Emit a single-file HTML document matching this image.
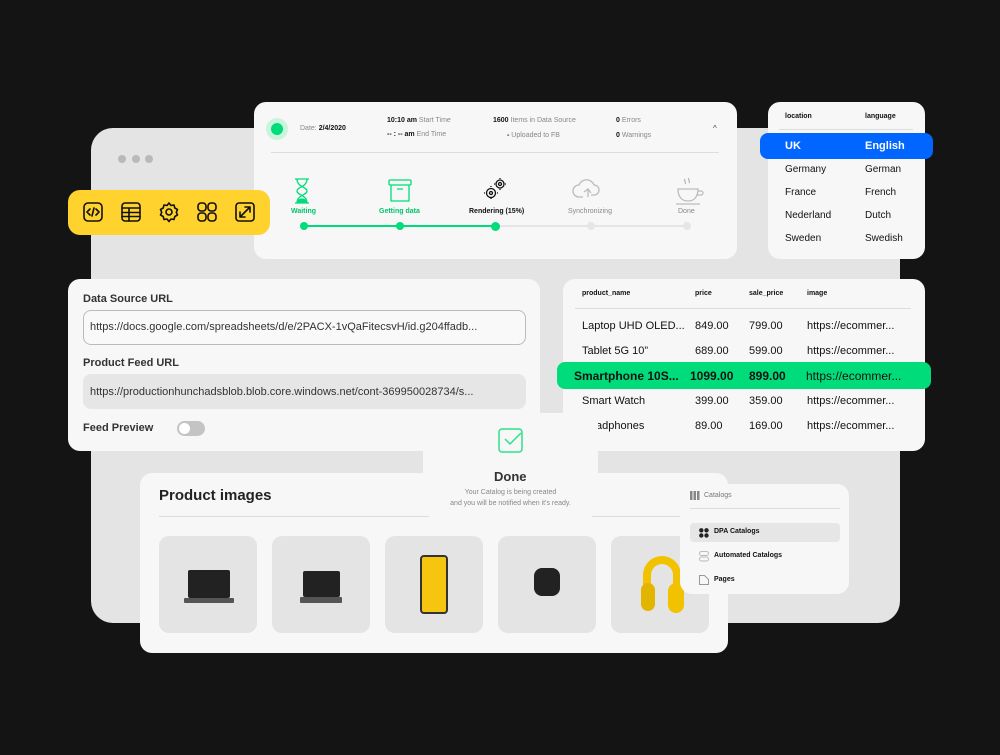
<!DOCTYPE html>
<html><head><meta charset="utf-8"><style>
*{box-sizing:border-box;margin:0;padding:0}
body{width:1000px;height:755px;background:#141414;position:relative;overflow:hidden;font-family:"Liberation Sans",sans-serif;color:#111}
.abs{position:absolute}
.card{position:absolute;background:#f7f7f7;border-radius:12px}
.t{position:absolute;white-space:nowrap}
.g{color:#888}
.tile{position:absolute;top:536px;width:98px;height:97px;background:#e4e4e4;border-radius:10px}
</style></head><body>
<!-- browser window -->
<div class="abs" style="left:91px;top:128px;width:809px;height:495px;background:#e4e4e4;border-radius:22px"></div>
<div class="abs" style="left:118px;top:155px;width:8px;height:8px;border-radius:50%;background:#b9b9b9"></div>
<div class="abs" style="left:132px;top:155px;width:8px;height:8px;border-radius:50%;background:#b9b9b9"></div>
<div class="abs" style="left:145px;top:155px;width:8px;height:8px;border-radius:50%;background:#b9b9b9"></div>

<!-- status card -->
<div class="card" style="left:254px;top:102px;width:483px;height:157px"></div>
<div class="abs" style="left:266px;top:118px;width:22px;height:22px;border-radius:50%;background:#c9f5dd"></div>
<div class="abs" style="left:271px;top:123px;width:12px;height:12px;border-radius:50%;background:#00dc7a"></div>
<div class="t" style="left:300px;top:125px;font-size:7px"><span class="g">Date:</span> <b style="font-weight:600">2/4/2020</b></div>
<div class="t" style="left:387px;top:117px;font-size:7px"><b>10:10 am</b> <span class="g">Start Time</span></div>
<div class="t" style="left:387px;top:131px;font-size:7px"><b>-- : -- am</b> <span class="g">End Time</span></div>
<div class="t" style="left:493px;top:117px;font-size:7px"><b>1600</b> <span class="g">Items in Data Source</span></div>
<div class="t" style="left:507px;top:132px;font-size:7px"><b>-</b> <span class="g">Uploaded to FB</span></div>
<div class="t" style="left:616px;top:117px;font-size:7px"><b>0</b> <span class="g">Errors</span></div>
<div class="t" style="left:616px;top:132px;font-size:7px"><b>0</b> <span class="g">Warnings</span></div>
<div class="t" style="left:713px;top:124px;font-size:8px;color:#444">^</div>
<div class="abs" style="left:271px;top:152px;width:448px;height:1px;background:#ddd"></div>
<svg class="abs" style="left:254px;top:175px" width="483" height="60" fill="none" stroke-width="1.3">
<g stroke="#00dc7a"><path d="M41 4h14M41 28h14M43 4c0 8 10 8 10 12s-10 4-10 12M53 4c0 8-10 8-10 12s10 4 10 12"/><path d="M44 27c1-4 7-4 8 0z" fill="#00dc7a"/>
<rect x="135" y="5" width="22" height="5" rx="1"/><path d="M137 10v16h18V10M143 14h6"/></g>
<g stroke="#111"><circle cx="246" cy="9" r="4"/><circle cx="246" cy="9" r="1.5"/><circle cx="237" cy="18" r="4.5"/><circle cx="237" cy="18" r="1.5"/><path d="M246 3v1M246 14v1M240 9h1M251 9h1M237 11v1M237 23v1M230 18h1M243 18h1"/></g>
<g stroke="#bbb"><path d="M329 22h-4a6 6 0 010-12 8 8 0 0115 0 5 5 0 010 10h-3M330 17l4-3 3 4M334 14v8"/>
<path d="M424 14h20c0 8-4 12-10 12s-10-4-10-12zM444 16h3a2 2 0 010 4h-4M422 29h24M431 4c-2 2 2 3 0 5M435 3c-2 2 2 3 0 5"/></g>
</svg>
<div class="t" style="left:291px;top:208px;font-size:7px;color:#00c46d;font-weight:bold">Waiting</div>
<div class="t" style="left:379px;top:208px;font-size:7px;color:#00c46d;font-weight:bold">Getting data</div>
<div class="t" style="left:469px;top:208px;font-size:7px;font-weight:bold">Rendering (15%)</div>
<div class="t" style="left:568px;top:208px;font-size:7px;color:#888">Synchronizing</div>
<div class="t" style="left:678px;top:208px;font-size:7px;color:#888">Done</div>
<div class="abs" style="left:304px;top:225px;width:192px;height:2px;background:#00dc7a"></div>
<div class="abs" style="left:496px;top:225px;width:191px;height:2px;background:#e6e6e6"></div>
<div class="abs" style="left:300px;top:222px;width:8px;height:8px;border-radius:50%;background:#00dc7a"></div>
<div class="abs" style="left:396px;top:222px;width:8px;height:8px;border-radius:50%;background:#00dc7a"></div>
<div class="abs" style="left:491px;top:222px;width:9px;height:9px;border-radius:50%;background:#00dc7a"></div>
<div class="abs" style="left:587px;top:222px;width:8px;height:8px;border-radius:50%;background:#e6e6e6"></div>
<div class="abs" style="left:683px;top:222px;width:8px;height:8px;border-radius:50%;background:#e6e6e6"></div>

<!-- yellow toolbar (on top of status card) -->
<div class="abs" style="left:68px;top:190px;width:202px;height:45px;background:#ffd22e;border-radius:12px"></div>
<svg class="abs" style="left:68px;top:190px" width="202" height="45" fill="none" stroke="#111" stroke-width="1.6" stroke-linecap="round" stroke-linejoin="round">
<rect x="16" y="13" width="18" height="18" rx="4"/><path d="M22 19l-3 3 3 3M28 19l3 3-3 3M26 18l-2 8"/>
<rect x="54" y="13" width="18" height="18" rx="3"/><path d="M54 18h18M54 22.5h18M54 26.5h18M61 18v13"/>
<circle cx="101" cy="22" r="3"/><path d="M101 13l2 2.5 3-.5.8 3 2.7 1.5-1.2 2.8 1.2 2.7-2.7 1.5-.8 3-3-.5-2 2.5-2-2.5-3 .5-.8-3-2.7-1.5 1.2-2.7-1.2-2.8 2.7-1.5.8-3 3 .5z"/>
<rect x="130" y="13" width="8" height="8" rx="3"/><rect x="140" y="13" width="8" height="8" rx="3"/><rect x="130" y="23" width="8" height="8" rx="3"/><rect x="140" y="23" width="8" height="8" rx="3"/>
<rect x="168" y="13" width="18" height="18" rx="3"/><path d="M172 27l10-10M177 17h5v5M172 22v5h5"/>
</svg>

<!-- language card -->
<div class="card" style="left:768px;top:102px;width:157px;height:157px"></div>
<div class="t" style="left:785px;top:113px;font-size:7px;font-weight:600">location</div>
<div class="t" style="left:865px;top:113px;font-size:7px;font-weight:600">language</div>
<div class="abs" style="left:779px;top:129px;width:134px;height:1px;background:#ddd"></div>
<div class="abs" style="left:760px;top:133px;width:173px;height:26px;background:#0066ff;border-radius:8px"></div>
<div class="t" style="left:785px;top:140px;font-size:11px;font-weight:bold;color:#fff">UK</div>
<div class="t" style="left:865px;top:140px;font-size:11px;font-weight:bold;color:#fff">English</div>
<div class="t" style="left:785px;top:164px;font-size:10px">Germany</div><div class="t" style="left:865px;top:164px;font-size:10px">German</div>
<div class="t" style="left:785px;top:187px;font-size:10px">France</div><div class="t" style="left:865px;top:187px;font-size:10px">French</div>
<div class="t" style="left:785px;top:210px;font-size:10px">Nederland</div><div class="t" style="left:865px;top:210px;font-size:10px">Dutch</div>
<div class="t" style="left:785px;top:233px;font-size:10px">Sweden</div><div class="t" style="left:865px;top:233px;font-size:10px">Swedish</div>

<!-- form card -->
<div class="card" style="left:68px;top:279px;width:472px;height:172px"></div>
<div class="t" style="left:83px;top:293px;font-size:11px;font-weight:bold;color:#333">Data Source URL</div>
<div class="abs" style="left:83px;top:310px;width:443px;height:35px;border:1px solid #bbb;border-radius:8px;background:#f9f9f9"></div>
<div class="t" style="left:90px;top:321px;font-size:11px;color:#333">https://docs.google.com/spreadsheets/d/e/2PACX-1vQaFitecsvH/id.g204ffadb...</div>
<div class="t" style="left:83px;top:357px;font-size:11px;font-weight:bold;color:#333">Product Feed URL</div>
<div class="abs" style="left:83px;top:374px;width:443px;height:35px;border-radius:8px;background:#e6e6e6"></div>
<div class="t" style="left:90px;top:386px;font-size:11px;color:#333">https://productionhunchadsblob.blob.core.windows.net/cont-369950028734/s...</div>
<div class="t" style="left:83px;top:422px;font-size:11px;font-weight:bold;color:#333">Feed Preview</div>
<div class="abs" style="left:177px;top:421px;width:28px;height:15px;border-radius:8px;background:#c4c4c4"></div>
<div class="abs" style="left:179px;top:423px;width:11px;height:11px;border-radius:50%;background:#fff"></div>

<!-- table card -->
<div class="card" style="left:563px;top:279px;width:362px;height:172px"></div>
<div class="t" style="left:582px;top:290px;font-size:7px;font-weight:600">product_name</div>
<div class="t" style="left:695px;top:290px;font-size:7px;font-weight:600">price</div>
<div class="t" style="left:749px;top:290px;font-size:7px;font-weight:600">sale_price</div>
<div class="t" style="left:807px;top:290px;font-size:7px;font-weight:600">image</div>
<div class="abs" style="left:575px;top:308px;width:336px;height:1px;background:#ddd"></div>
<div class="t" style="left:582px;top:320px;font-size:11px">Laptop UHD OLED...</div><div class="t" style="left:695px;top:320px;font-size:11px">849.00</div><div class="t" style="left:749px;top:320px;font-size:11px">799.00</div><div class="t" style="left:807px;top:320px;font-size:11px">https://ecommer...</div>
<div class="t" style="left:582px;top:345px;font-size:11px">Tablet 5G 10”</div><div class="t" style="left:695px;top:345px;font-size:11px">689.00</div><div class="t" style="left:749px;top:345px;font-size:11px">599.00</div><div class="t" style="left:807px;top:345px;font-size:11px">https://ecommer...</div>
<div class="abs" style="left:557px;top:362px;width:374px;height:27px;background:#00dc7a;border-radius:8px"></div>
<div class="t" style="left:574px;top:369px;font-size:12px;font-weight:bold">Smartphone 10S...</div><div class="t" style="left:690px;top:369px;font-size:12px;font-weight:bold">1099.00</div><div class="t" style="left:749px;top:369px;font-size:12px;font-weight:bold">899.00</div><div class="t" style="left:806px;top:369px;font-size:12px">https://ecommer...</div>
<div class="t" style="left:582px;top:395px;font-size:11px">Smart Watch</div><div class="t" style="left:695px;top:395px;font-size:11px">399.00</div><div class="t" style="left:749px;top:395px;font-size:11px">359.00</div><div class="t" style="left:807px;top:395px;font-size:11px">https://ecommer...</div>
<div class="t" style="left:582px;top:420px;font-size:11px">Headphones</div><div class="t" style="left:695px;top:420px;font-size:11px">89.00</div><div class="t" style="left:749px;top:420px;font-size:11px">169.00</div><div class="t" style="left:807px;top:420px;font-size:11px">https://ecommer...</div>

<!-- product images -->
<div class="card" style="left:140px;top:473px;width:588px;height:180px"></div>
<div class="t" style="left:159px;top:487px;font-size:15px;font-weight:600;color:#222">Product images</div>
<div class="abs" style="left:159px;top:516px;width:550px;height:1px;background:#ddd"></div>
<div class="tile" style="left:159px"></div><div class="tile" style="left:272px"></div><div class="tile" style="left:385px"></div><div class="tile" style="left:498px"></div><div class="tile" style="left:611px"></div>
<div class="abs" style="left:188px;top:570px;width:42px;height:28px;background:#222;border-radius:2px"></div>
<div class="abs" style="left:184px;top:598px;width:50px;height:5px;background:#555;border-radius:1px"></div>
<div class="abs" style="left:303px;top:571px;width:37px;height:26px;background:#222;border-radius:2px"></div>
<div class="abs" style="left:300px;top:597px;width:42px;height:6px;background:#555;border-radius:1px"></div>
<div class="abs" style="left:420px;top:555px;width:28px;height:59px;background:#f6c510;border:2px solid #333;border-radius:4px"></div>
<div class="abs" style="left:534px;top:568px;width:26px;height:28px;background:#222;border-radius:8px"></div>
<div class="abs" style="left:643px;top:556px;width:38px;height:50px;border:8px solid #f2c200;border-bottom:none;border-radius:20px 20px 0 0"></div>
<div class="abs" style="left:641px;top:583px;width:14px;height:28px;background:#e3b400;border-radius:7px"></div>
<div class="abs" style="left:668px;top:583px;width:16px;height:30px;background:#f2c200;border-radius:8px"></div>

<!-- done card -->
<div class="card" style="left:423px;top:413px;width:175px;height:105px;border-radius:0 0 12px 12px"></div>
<svg class="abs" style="left:498px;top:428px" width="26" height="26" fill="none" stroke="#2ee08a" stroke-width="1.5"><rect x="1" y="1" width="23" height="23" rx="3"/><path d="M7 11l5 5 11-11"/></svg>
<div class="t" style="left:494px;top:469px;font-size:13px;font-weight:bold;color:#333">Done</div>
<div class="t" style="left:423px;top:487px;width:175px;text-align:center;font-size:7px;color:#888;line-height:11px">Your Catalog is being created<br>and you will be notified when it's ready.</div>

<!-- catalogs card -->
<div class="card" style="left:680px;top:484px;width:169px;height:110px"></div>
<svg class="abs" style="left:690px;top:491px" width="10" height="10"><rect x="0" y="0" width="2.5" height="9" fill="#888"/><rect x="3.5" y="0" width="2.5" height="9" fill="#888"/><rect x="7" y="0" width="2.5" height="9" fill="#888"/></svg>
<div class="t" style="left:704px;top:492px;font-size:7px;color:#777">Catalogs</div>
<div class="abs" style="left:690px;top:508px;width:150px;height:1px;background:#ddd"></div>
<div class="abs" style="left:690px;top:523px;width:150px;height:19px;background:#e6e6e6;border-radius:4px"></div>
<svg class="abs" style="left:699px;top:528px" width="10" height="10" fill="#222"><circle cx="2.3" cy="2.3" r="2.2"/><circle cx="7.5" cy="2.3" r="2.2"/><circle cx="2.3" cy="7.5" r="2.2"/><circle cx="7.5" cy="7.5" r="2.2"/></svg>
<div class="t" style="left:714px;top:528px;font-size:7px;font-weight:600">DPA Catalogs</div>
<svg class="abs" style="left:699px;top:551px" width="10" height="11" fill="none" stroke="#bbb"><rect x=".5" y=".5" width="9" height="4" rx="2"/><rect x=".5" y="6" width="9" height="4" rx="2"/></svg>
<div class="t" style="left:714px;top:552px;font-size:7px;font-weight:600">Automated Catalogs</div>
<svg class="abs" style="left:699px;top:575px" width="10" height="11" fill="none" stroke="#999"><path d="M.5 .5h5l4 4v5h-9z"/></svg>
<div class="t" style="left:714px;top:576px;font-size:7px;font-weight:600">Pages</div>
</body></html>
